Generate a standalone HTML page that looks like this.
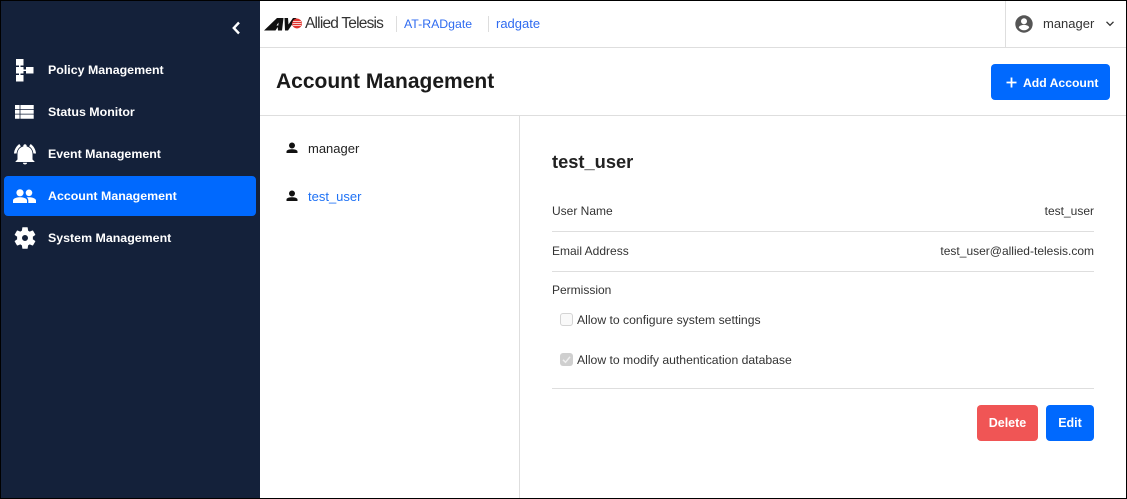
<!DOCTYPE html>
<html><head><meta charset="utf-8"><style>
html,body{margin:0;padding:0;background:#fff}
body{width:1127px;height:499px;position:relative;overflow:hidden;font-family:"Liberation Sans",sans-serif;color:#222}
.a{position:absolute;white-space:nowrap}
.n{position:absolute;left:48px;color:#fff;font-weight:700;font-size:12.4px;line-height:16px;white-space:nowrap}
.l{position:absolute;background:#dedede}
.t{position:absolute;font-size:12px;line-height:16px;white-space:nowrap;color:#333}
.btn{position:absolute;border-radius:4px;color:#fff;font-weight:700;font-size:12.5px;text-align:center;line-height:36px}
svg{position:absolute;display:block}
</style></head><body>
<div class="a" style="left:0;top:0;width:260px;height:499px;background:#14213a"></div>
<div class="a" style="left:4px;top:176px;width:252px;height:40px;background:#0069fe;border-radius:4px"></div>

<svg style="left:230px;top:21px" width="12" height="14" viewBox="0 0 12 14"><path d="M9 1.500L3.800 7L9 12.500" fill="none" stroke="#fff" stroke-width="2.400"/></svg>

<svg style="left:0;top:0" width="40" height="90" viewBox="0 0 40 90" fill="#fff"><path d="M16 59h7.500v6.500H16zM16 67h7.500v6.500H16zM16 75h7.500v6.500H16zM26 67h7.500v6.500H26zM19 65h1.500v2H19zM19 73h1.500v2H19zM23 69.500h3v1.500h-3z"/></svg>
<svg style="left:0;top:98px" width="40" height="26" viewBox="0 0 40 26" fill="#fff"><path d="M15 7h4.600v4H15zM20.400 7H33.700v4H20.400zM15 11.800h4.600v3.900H15zM20.400 11.800H33.700v3.900H20.400zM15 16.500h4.600v4.200H15zM20.400 16.500H33.700v4.200H20.400z"/></svg>
<svg style="left:13px;top:142px" width="24" height="24" viewBox="0 0 24 24" fill="#fff"><path d="M12 22.500c1.300 0 2.100-.8 2.100-1.700H9.900c0 .9.800 1.700 2.100 1.700zM19.500 17.500V12c0-3.700-2-6.700-5.800-7.500V4c0-1-.8-1.700-1.700-1.700s-1.700.7-1.700 1.700v.5C6.500 5.300 4.500 8.300 4.500 12v5.500L2.500 19.500V20h19v-.5z"/><path d="M6.300 2C3.300 4.200 1.300 7.500 1 11.500h2.600C3.900 8.500 5.300 6 7.900 4.200zM20.400 11.500H23c-.3-4-2.300-7.300-5.300-9.500L16.100 4.200c2.600 1.800 4 4.300 4.300 7.300z"/></svg>
<svg style="left:13px;top:189px" width="23" height="15" viewBox="0 0 23 15" fill="#fff"><circle cx="7" cy="3.800" r="3.600"/><circle cx="16" cy="3.800" r="3.300"/><path d="M0 14v-2.500C0 9.200 4.500 8.300 7 8.300s7 .9 7 3.200V14zM15.300 14v-2.500c0-1.300-.6-2.400-1.600-3.100.7-.1 1.600-.2 2.300-.2 2.500 0 7 .9 7 3.300V14z"/></svg>
<svg style="left:13px;top:226px" width="24" height="24" viewBox="0 0 24 24" fill="#fff"><path fill-rule="evenodd" d="M19.800 13.200c.1-.4.100-.8.100-1.200s0-.8-.1-1.200l2.300-1.700c.2-.2.300-.5.100-.7l-2.100-3.700c-.1-.2-.4-.3-.7-.2l-2.700 1.100c-.5-.4-1.100-.7-1.600-1l-.4-2.800c0-.3-.3-.5-.5-.5h-4.400c-.3 0-.5.2-.5.500l-.4 2.800c-.6.300-1.100.6-1.600 1L4.600 4.500c-.3-.1-.6 0-.7.200L1.800 8.400c-.2.200-.1.500.1.700l2.300 1.700c-.1.400-.1.800-.1 1.200s0 .8.100 1.200l-2.300 1.700c-.2.200-.3.500-.1.700l2.100 3.700c.1.200.4.300.7.200l2.700-1.100c.5.400 1 .7 1.600 1l.4 2.800c0 .3.200.5.500.5h4.400c.2 0 .5-.2.500-.5l.4-2.800c.5-.3 1.100-.6 1.600-1l2.700 1.100c.3.100.6 0 .7-.2l2.100-3.700c.2-.2.100-.5-.1-.7zM12 15a3 3 0 1 1 0-6 3 3 0 0 1 0 6z"/></svg>

<div class="n" style="top:62px">Policy Management</div>
<div class="n" style="top:104px">Status Monitor</div>
<div class="n" style="top:146px">Event Management</div>
<div class="n" style="top:188px">Account Management</div>
<div class="n" style="top:230px">System Management</div>

<svg style="left:260px;top:10px" width="46" height="28" viewBox="0 0 46 28"><path fill-rule="evenodd" fill="#111" d="M4 20.500L17 8h6.500L22 20.500h-4l-.3-3.500-2.200 3.500zM18.500 12.500l-2 3h1.800zM24.500 8H28l.5 6.500L33 8h3.500L28 20.500h-3z"/><circle cx="37" cy="13.500" r="5" fill="#e2342f"/><path d="M33 11.500h8M32.500 13.500h9M33 15.500h8" stroke="#fff" stroke-width=".8"/></svg>
<div class="a" style="left:305px;top:15px;font-size:15.5px;line-height:18px;letter-spacing:-.8px;color:#333">Allied Telesis</div>
<div class="a" style="left:396px;top:16px;width:1px;height:16px;background:#ddd"></div>
<div class="a" style="left:404px;top:16px;font-size:12.3px;line-height:16px;color:#2f6bf0">AT-RADgate</div>
<div class="a" style="left:488px;top:16px;width:1px;height:16px;background:#ddd"></div>
<div class="a" style="left:496px;top:16px;font-size:13px;line-height:16px;color:#2f6bf0">radgate</div>

<div class="l" style="left:260px;top:47px;width:867px;height:1px"></div>
<div class="l" style="left:1005px;top:0;width:1px;height:47px"></div>
<svg style="left:1014px;top:14px" width="20" height="20" viewBox="0 0 20 20"><path fill="#555" fill-rule="evenodd" d="M10 1.300a8.700 8.700 0 1 0 0 17.400 8.700 8.700 0 0 0 0-17.400zM10 4.300a3 3 0 1 1 0 6 3 3 0 0 1 0-6zM10 16.300c-2.200 0-4.100-1.100-5.200-2.800 0-1.700 3.500-2.600 5.200-2.600s5.200.9 5.200 2.600c-1.100 1.700-3 2.800-5.200 2.800z"/></svg>
<div class="a" style="left:1043px;top:16px;font-size:13px;line-height:16px;color:#333">manager</div>
<svg style="left:1105px;top:20px" width="10" height="8" viewBox="0 0 10 8"><path d="M1.500 1.800L5 5.300L8.500 1.800" fill="none" stroke="#333" stroke-width="1.300"/></svg>

<div class="a" style="left:276px;top:69px;font-size:21px;line-height:25px;font-weight:700;color:#1a1a1a">Account Management</div>
<div class="a" style="left:991px;top:64px;width:119px;height:36px;background:#0069fe;border-radius:4px"></div>
<svg style="left:1006px;top:77px" width="11" height="11" viewBox="0 0 11 11"><path d="M5.500.5v10M.5 5.500h10" stroke="#fff" stroke-width="1.800"/></svg>
<div class="a" style="left:1023px;top:75px;font-size:12.2px;line-height:16px;font-weight:700;color:#fff">Add Account</div>

<div class="l" style="left:260px;top:115px;width:867px;height:1px"></div>
<div class="l" style="left:519px;top:116px;width:1px;height:383px"></div>

<svg style="left:284px;top:140px" width="16" height="16" viewBox="0 0 16 16"><path fill="#111" d="M8 2.500a3 3 0 1 1 0 6 3 3 0 0 1 0-6zM2.500 13v-1.500C2.500 10 5.500 9.300 8 9.300s5.500.7 5.500 2.200V13z"/></svg>
<div class="a" style="left:308px;top:141px;font-size:13px;line-height:16px;color:#222">manager</div>
<svg style="left:284px;top:188px" width="16" height="16" viewBox="0 0 16 16"><path fill="#111" d="M8 2.500a3 3 0 1 1 0 6 3 3 0 0 1 0-6zM2.500 13v-1.500C2.500 10 5.500 9.300 8 9.300s5.500.7 5.500 2.200V13z"/></svg>
<div class="a" style="left:308px;top:189px;font-size:13px;line-height:16px;color:#1f72f5">test_user</div>

<div class="a" style="left:552px;top:151px;font-size:18.3px;line-height:22px;font-weight:700;color:#222">test_user</div>

<div class="t" style="left:552px;top:203px">User Name</div>
<div class="t" style="right:33px;top:203px">test_user</div>
<div class="l" style="left:552px;top:231px;width:542px;height:1px"></div>
<div class="t" style="left:552px;top:243px">Email Address</div>
<div class="t" style="right:33px;top:243px">test_user@allied-telesis.com</div>
<div class="l" style="left:552px;top:271px;width:542px;height:1px"></div>
<div class="t" style="left:552px;top:282px">Permission</div>

<div class="a" style="left:560px;top:313px;width:11px;height:11px;background:#f9f9f9;border:1px solid #d4d4d4;border-radius:3px"></div>
<div class="t" style="left:577px;top:312px;font-size:12.2px">Allow to configure system settings</div>
<div class="a" style="left:560px;top:353px;width:13px;height:13px;background:#cfcfcf;border-radius:3px"></div>
<svg style="left:560px;top:353px" width="13" height="13" viewBox="0 0 13 13"><path d="M3 6.800L5.500 9.300L10 3.800" fill="none" stroke="#f0f0f0" stroke-width="1.500"/></svg>
<div class="t" style="left:577px;top:352px;font-size:12.2px">Allow to modify authentication database</div>

<div class="l" style="left:552px;top:388px;width:542px;height:1px"></div>
<div class="btn" style="left:977px;top:405px;width:61px;height:36px;background:#f05555">Delete</div>
<div class="btn" style="left:1046px;top:405px;width:48px;height:36px;background:#0069fe">Edit</div>

<div class="a" style="left:0;top:0;width:1125px;height:497px;border:1px solid #000;pointer-events:none"></div>
</body></html>
